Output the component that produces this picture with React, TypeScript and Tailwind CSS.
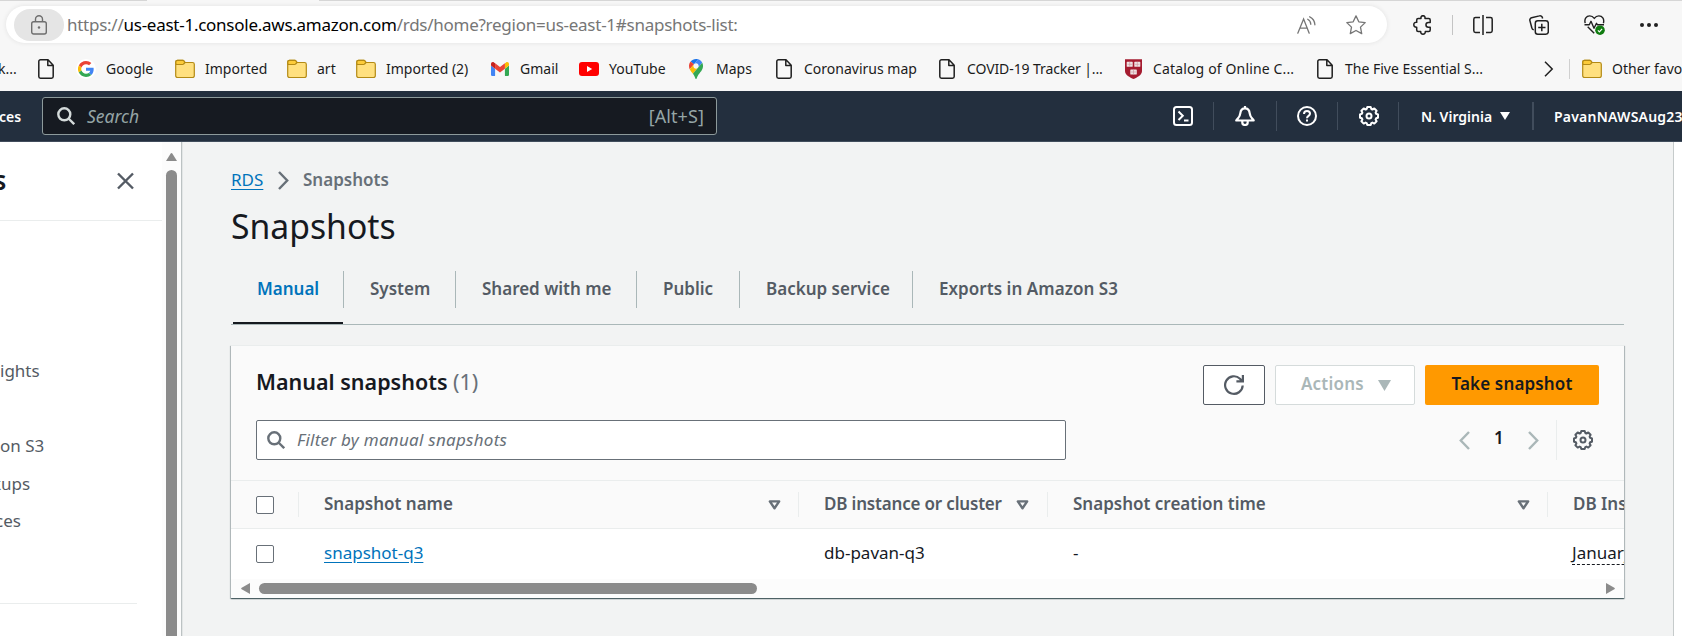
import type { ReactNode } from 'react';

const Doc = () => (
  <svg className="h-5 w-4 shrink-0" viewBox="0 0 16 20" fill="none" stroke="#202020" strokeWidth="1.500" strokeLinejoin="round">
    <path d="M2.500.8H10l5.200 5.400v11.300a1.700 1.700 0 0 1-1.700 1.700h-11A1.700 1.700 0 0 1 .8 17.500V2.500A1.700 1.700 0 0 1 2.500.8zM9.800 1v5.500h5.200" />
  </svg>
);

const Folder = () => (
  <svg className="h-5 w-5 shrink-0" viewBox="0 0 20 20" stroke="#b38a15" strokeWidth="1.200" strokeLinejoin="round">
    <path d="M.7 3v13.700A1.800 1.800 0 0 0 2.500 18.500h15a1.800 1.800 0 0 0 1.800-1.800V5.300a1.800 1.800 0 0 0-1.800-1.800H10L8.200 1.300H2.500A1.800 1.800 0 0 0 .7 3z" fill="#ffe07f" />
    <path d="M.8 4.500V3a1.700 1.700 0 0 1 1.700-1.700h5.300c.5 0 .8.2 1.100.6L10 3.500 8.600 5c-.3.400-.7.500-1.100.500H2A1.100 1.100 0 0 1 .8 4.500z" fill="#fccb3a" />
  </svg>
);

const Google = () => (
  <span className="flex h-5 w-5 shrink-0 items-center justify-center rounded-full bg-white">
    <svg className="h-4 w-4" viewBox="0 0 48 48">
      <path fill="#ea4335" d="M24 9.500c3.500 0 6.700 1.200 9.200 3.600l6.900-6.900C35.900 2.400 30.500 0 24 0 14.600 0 6.500 5.400 2.600 13.200l8 6.200C12.400 13.700 17.700 9.500 24 9.500z" />
      <path fill="#4285f4" d="M47 24.500c0-1.600-.2-3.100-.4-4.500H24v9h12.900c-.6 3-2.300 5.500-4.800 7.200l7.700 6C44.400 38 47 31.800 47 24.500z" />
      <path fill="#fbbc05" d="M10.500 28.600a14.500 14.500 0 0 1 0-9.200l-8-6.200a24 24 0 0 0 0 21.600z" />
      <path fill="#34a853" d="M24 48c6.500 0 11.900-2.100 15.900-5.800l-7.700-6c-2.200 1.500-4.900 2.300-8.200 2.300-6.300 0-11.600-4.200-13.500-9.900l-8 6.200C6.500 42.600 14.600 48 24 48z" />
    </svg>
  </span>
);

const Gmail = () => (
  <svg className="h-3.5 w-[18px] shrink-0" viewBox="52 42 88 66" preserveAspectRatio="none">
    <path fill="#4285f4" d="M58 108h14V74L52 59v43a6 6 0 0 0 6 6" />
    <path fill="#34a853" d="M120 108h14a6 6 0 0 0 6-6V59l-20 15" />
    <path fill="#fbbc04" d="M120 48v26l20-15v-8c0-7.400-8.500-11.700-14.400-7.200" />
    <path fill="#ea4335" d="M72 74V48l24 18 24-18v26L96 92" />
    <path fill="#c5221f" d="M52 51v8l20 15V48l-5.600-4.200C60.500 39.300 52 43.600 52 51" />
  </svg>
);

const YouTube = () => (
  <svg className="h-3.5 w-5 shrink-0" viewBox="0 0 20 14">
    <rect width="20" height="14" rx="3" fill="#f00" />
    <path d="M8 4v6l5.200-3z" fill="#fff" />
  </svg>
);

const Maps = () => (
  <svg className="h-5 w-3.5 shrink-0" viewBox="0 0 92.300 132.300" preserveAspectRatio="none">
    <path fill="#1a73e8" d="M60.200 2.200C55.800.8 51 0 46.100 0 32 0 19.300 6.400 10.800 16.500l21.800 18.300z" />
    <path fill="#ea4335" d="M10.800 16.500C4.100 24.500 0 34.900 0 46.100c0 8.700 1.700 15.700 4.600 22l28-33.300z" />
    <path fill="#4285f4" d="M46.200 28.500c9.800 0 17.700 7.900 17.700 17.700 0 4.300-1.600 8.300-4.200 11.400 0 0 13.900-16.600 27.500-32.700-5.600-10.800-15.300-19-27-22.700L32.600 34.800c3.300-3.800 8.100-6.300 13.600-6.300" />
    <path fill="#fbbc04" d="M46.200 63.800c-9.800 0-17.700-7.900-17.700-17.700 0-4.300 1.500-8.300 4.100-11.300l-28 33.300c4.800 10.600 12.800 19.200 21 29.900l34.100-40.500c-3.300 3.900-8.100 6.300-13.500 6.300" />
    <path fill="#34a853" d="M59.100 109.200c15.400-24.100 33.300-35 33.300-63 0-7.700-1.900-14.900-5.200-21.300L25.600 98c2.600 3.400 5.300 7.300 7.900 11.300 9.400 14.500 6.800 23.100 12.800 23.100s3.400-8.700 12.800-23.200" />
  </svg>
);

const Shield = () => (
  <svg className="h-5 w-[17px] shrink-0" viewBox="0 0 17 20">
    <path d="M0 .3h17V12c0 4-5 6.500-8.500 8C5 18.500 0 16 0 12z" fill="#a51c30" />
    <g fill="#efe4e4">
      <rect x="1.700" y="2.800" width="6" height="5" rx=".6" />
      <rect x="9.300" y="2.800" width="6" height="5" rx=".6" />
      <rect x="5.300" y="10.500" width="6.500" height="5" rx=".6" />
    </g>
    <path d="M4.700 2.800v5M12.300 2.800v5M8.500 10.500v5M2.500 5.300h4.500M10 5.300h4.500M6 13h5" stroke="#c9909a" strokeWidth=".6" />
  </svg>
);

const Gear = ({ className }: { className: string }) => (
  <svg className={className} viewBox="0 0 20 20" fill="none" stroke="currentColor" strokeWidth="2">
    <path strokeLinejoin="round" d="M8.300 1h3.400l.6 2 1.100.5 1.900-1 2.300 2.300-1 1.900.5 1.100 1.900.6v3.300l-1.900.6-.5 1.200 1 1.800-2.300 2.300-1.900-1-1.100.5-.6 1.900H8.300l-.6-1.900-1.100-.5-1.900 1-2.300-2.300 1-1.800-.5-1.200L1 11.700V8.400l1.900-.6.5-1.100-1-1.900 2.300-2.300 1.900 1L7.700 3z" />
    <circle cx="10" cy="10" r="2.500" />
  </svg>
);

const SearchIcon = ({ className }: { className: string }) => (
  <svg className={className} viewBox="0 0 18 18" fill="none" stroke="currentColor" strokeWidth="2.400">
    <circle cx="7.300" cy="7.300" r="6" />
    <path d="M11.500 11.500l5.700 5.700" />
  </svg>
);

const Chevron = ({ className, left }: { className: string; left?: boolean }) => (
  <svg className={className} viewBox="0 0 11 19" fill="none" stroke="currentColor" strokeWidth="2.400">
    <path d={left ? 'M10 1L1.800 9.500 10 18' : 'M1 1l8.200 8.500L1 18'} />
  </svg>
);

const Sort = () => (
  <svg className="h-2.5 w-[13px] shrink-0 text-[#687078]" viewBox="0 0 13 10" fill="none" stroke="currentColor" strokeWidth="2.400">
    <path d="M1.800 1.400h9.400L6.500 8.200z" strokeLinejoin="round" />
  </svg>
);

const Bookmark = ({ icon, label, className }: { icon: ReactNode; label: string; className: string }) => (
  <div className={`flex shrink-0 items-center whitespace-nowrap ${className}`}>
    {icon}
    <span className="pt-px">{label}</span>
  </div>
);

function AddressBar() {
  return (
    <div className="flex h-[45px] shrink-0 flex-col">
      <div className="flex h-px justify-between">
        <div className="w-[147px] bg-[#d6d6d6]" />
        <div className="w-[1363px] bg-[#d6d6d6]" />
      </div>
      <div className="flex items-center pt-[5px]">
        <div className="ml-1.5 flex h-[37px] w-[1381px] shrink-0 items-center rounded-full bg-white pl-2 shadow-[0_0_5px_rgba(0,0,0,0.09)]">
          <div className="flex h-8 w-[50px] items-center justify-center rounded-full bg-[#e5e5e5]">
            <svg className="h-5 w-4" viewBox="0 0 16 20" fill="none" stroke="#6e6e6e" strokeWidth="1.400">
              <rect x=".7" y="6.700" width="14.600" height="12.300" rx="2" />
              <path d="M4.500 6.500V4.200a3.500 3.500 0 0 1 7 0v2.300" />
              <circle cx="8" cy="12.500" r="1.200" fill="#6e6e6e" stroke="none" />
            </svg>
          </div>
          <div className="ml-[3px] flex-1 text-[17px] leading-6 tracking-[-0.26px] text-[#767676]">
            https://<span className="text-black">us-east-1.console.aws.amazon.com</span>/rds/home?region=us-east-1#snapshots-list:
          </div>
          <svg className="h-[18px] w-[19px]" viewBox="0 0 19 18" fill="none" stroke="#767676" strokeWidth="1.300" strokeLinecap="round">
            <path d="M.8 17.200L6.600 3l5.600 14.200M2.800 12.200h7.600" />
            <path d="M10.700 3.300c1.700.9 3 2.800 3.100 5M12.700.8c2.900 1.300 5 4.200 5.200 8" />
          </svg>
          <svg className="mr-[21px] ml-[30px] h-5 w-5" viewBox="0 0 20 20" fill="none" stroke="#767676" strokeWidth="1.300" strokeLinejoin="round">
            <path d="M10 .9l2.800 5.900 6.400.8-4.700 4.500 1.200 6.500-5.700-3.100-5.700 3.100 1.200-6.500L.8 7.600l6.400-.8z" />
          </svg>
        </div>
        <svg className="ml-[26px] h-5 w-[19px] shrink-0" viewBox="0 0 19 20" fill="none" stroke="#202020" strokeWidth="1.500" strokeLinejoin="round">
          <path d="M5.200 3.500H8c-.3-1.800.6-2.800 2-2.800s2.300 1 2 2.800h3.700a1.500 1.500 0 0 1 1.500 1.500v2.400h-1.800a2.400 2.400 0 0 0 0 4.900h1.800v2.700a1.500 1.500 0 0 1-1.500 1.500H12.300c.1 1.700-.8 2.700-2.300 2.700s-2.400-1-2.300-2.700H5.200a1.500 1.500 0 0 1-1.500-1.500v-2.800c-1.800.2-2.900-.8-2.900-2.500s1.100-2.600 2.900-2.400V5a1.500 1.500 0 0 1 1.500-1.500z" />
        </svg>
        <div className="ml-5 h-5 w-px shrink-0 bg-[#c4c4c4]" />
        <svg className="ml-5 h-5 w-5 shrink-0" viewBox="0 0 20 20" fill="none" stroke="#202020" strokeWidth="1.500">
          <path d="M10 0v20M7 2.500H2.500a1.700 1.700 0 0 0-1.700 1.700v11.600a1.700 1.700 0 0 0 1.700 1.700H7M13 2.500h4.500a1.700 1.700 0 0 1 1.700 1.700v11.600a1.700 1.700 0 0 1-1.700 1.700H13" />
        </svg>
        <svg className="ml-9 h-5 w-5 shrink-0" viewBox="0 0 20 20" fill="none" stroke="#202020" strokeWidth="1.500">
          <rect x="6.300" y="5.800" width="13" height="13.400" rx="2.500" />
          <path d="M12.800 8.800v7.400M9.200 12.500h7.300M4.800 14.700a2.500 2.500 0 0 1-2-1.900L.9 5.600a2.300 2.300 0 0 1 1.700-2.800L10.400.9a2.400 2.400 0 0 1 3 1.700l.2.900" />
        </svg>
        <svg className="ml-[35px] h-5 w-[21px] shrink-0" viewBox="0 0 21 20" fill="none" stroke="#202020" strokeWidth="1.400" strokeLinejoin="round">
          <path d="M1.200 8.200C0 3.500 2.500.9 5.700.9c2 0 3.500 1 4.600 2.500C11.400 1.900 12.900.9 14.900.9c3.300 0 5.700 2.700 4.500 7.300M.5 9.800h4.800l1.700-3.500 3 7 2.500-5 1 1.500h6.500M3.700 11.800l6.500 6.500" />
          <circle cx="16" cy="15.200" r="4.800" fill="#107c10" stroke="none" />
          <path d="M13.900 15.300l1.500 1.500 2.700-3" stroke="#fff" strokeWidth="1.200" />
        </svg>
        <div className="ml-[35px] flex shrink-0 gap-[3px]">
          <span className="size-[4px] rounded-full bg-[#202020]" />
          <span className="size-[4px] rounded-full bg-[#202020]" />
          <span className="size-[4px] rounded-full bg-[#202020]" />
        </div>
      </div>
    </div>
  );
}

function Bookmarks() {
  return (
    <div className="flex h-[46px] shrink-0 items-center overflow-hidden pt-px text-[14px] leading-5 text-[#1b1b1b]">
      <div className="flex h-full w-[38px] shrink-0 items-center">
        <span className="-ml-0.5">k...</span>
      </div>
      <Doc />
      <Bookmark className="ml-[22px] w-[99px] gap-[10px]" icon={<Google />} label="Google" />
      <Bookmark className="w-[112px] gap-[10px]" icon={<Folder />} label="Imported" />
      <Bookmark className="w-[69px] gap-[10px]" icon={<Folder />} label="art" />
      <Bookmark className="w-[135px] gap-[10px]" icon={<Folder />} label="Imported (2)" />
      <Bookmark className="w-[88px] gap-[11px]" icon={<Gmail />} label="Gmail" />
      <Bookmark className="w-[110px] gap-[10px]" icon={<YouTube />} label="YouTube" />
      <Bookmark className="w-[87px] gap-[13px]" icon={<Maps />} label="Maps" />
      <Bookmark className="w-[163px] gap-[12px]" icon={<Doc />} label="Coronavirus map" />
      <Bookmark className="w-[186px] gap-[12px] tracking-[-0.1px]" icon={<Doc />} label="COVID-19 Tracker |..." />
      <Bookmark className="w-[192px] gap-[11px] tracking-[0.15px]" icon={<Shield />} label="Catalog of Online C..." />
      <Bookmark className="w-[227px] gap-[12px]" icon={<Doc />} label="The Five Essential S..." />
      <svg className="h-4 w-2.5 shrink-0" viewBox="0 0 10 16" fill="none" stroke="#202020" strokeWidth="1.500">
        <path d="M1 .8L8.200 8 1 15.200" />
      </svg>
      <div className="ml-[15px] h-5 w-px shrink-0 bg-[#d0d0d0]" />
      <Bookmark className="ml-3 w-[120px] gap-[10px]" icon={<Folder />} label="Other favorites" />
    </div>
  );
}

function ConsoleNav() {
  return (
    <header className="flex h-[51px] shrink-0 items-center overflow-hidden border-b border-[#414d5c] bg-[#232f3e] text-[14px] font-semibold text-white">
      <div className="flex w-[42px] shrink-0">
        <span className="-ml-px pt-px">ces</span>
      </div>
      <div className="flex h-[38px] w-[675px] shrink-0 items-center rounded-[3px] border border-[#8d9a9b] bg-[#161a21] pr-3 pl-3.5 font-normal text-[#95a5a6]">
        <SearchIcon className="size-[18px] text-[#d5dbdb]" />
        <span className="ml-3 flex-1 text-[17.500px] leading-6 italic">Search</span>
        <span className="text-[18px] leading-6 tracking-[0.1px]">[Alt+S]</span>
      </div>
      <svg className="ml-[456px] h-5 w-5 shrink-0" viewBox="0 0 20 20" fill="none" stroke="#fff" strokeWidth="2">
        <rect x="1" y="1" width="18" height="18" rx="2.500" />
        <path d="M5.500 5.500L9.800 9.800 5.500 14M11 14.500H15.500" />
      </svg>
      <div className="ml-5 h-7 w-px shrink-0 bg-[#414d5c]" />
      <svg className="ml-[21px] h-5 w-5 shrink-0" viewBox="0 0 20 20" fill="none" stroke="#fff" strokeWidth="2.200" strokeLinejoin="round">
        <path d="M10 0v2.500M10 2.300c-3 0-4.400 2.200-4.700 5C4.900 11 3.500 11.500 1.300 14.500h17.400C16.500 11.500 15.100 11 14.700 7.300c-.3-2.800-1.700-5-4.700-5z" />
        <path d="M7.300 15v1.500a2.700 2.500 0 0 0 5.400 0V15" />
      </svg>
      <div className="ml-[21px] h-[30px] w-px shrink-0 bg-[#414d5c]" />
      <svg className="ml-5 h-5 w-5 shrink-0" viewBox="0 0 20 20" fill="none" stroke="#fff" strokeWidth="2">
        <circle cx="10" cy="10" r="9" />
        <path d="M7 8c0-1.800 1.200-2.900 3-2.900s3 1 3 2.600c0 2.100-3 2.200-3 4.500M10 13.500v2" />
      </svg>
      <div className="ml-5 h-7 w-px shrink-0 bg-[#414d5c]" />
      <Gear className="ml-[21px] h-5 w-5 shrink-0" />
      <div className="ml-[19px] h-7 w-px shrink-0 bg-[#414d5c]" />
      <span className="ml-[22px] w-[79px] shrink-0 pt-px">N. Virginia</span>
      <svg className="h-2 w-2.5 shrink-0" viewBox="0 0 10 8">
        <path d="M0 0h10L5 8z" fill="#fff" />
      </svg>
      <div className="ml-[22px] h-7 w-0.5 shrink-0 bg-[#414d5c]" />
      <span className="ml-5 shrink-0 pt-px tracking-[0.22px]">PavanNAWSAug23</span>
    </header>
  );
}

function Sidebar() {
  return (
    <aside className="flex w-[183px] shrink-0 bg-white">
      <div className="flex w-[162px] shrink-0 flex-col overflow-hidden text-[17px] leading-6 text-[#545b64]">
        <div className="flex h-[79px] shrink-0 items-center justify-between border-b border-[#eaeded] pr-7">
          <span className="-ml-[6px] text-[22px] font-bold text-[#16191f]">S</span>
          <svg className="h-[18px] w-[17px]" viewBox="0 0 17 18" stroke="#545b64" strokeWidth="2.400">
            <path d="M1 1.500l15 15M16 1.500l-15 15" />
          </svg>
        </div>
        <span className="mt-[138px]">ights</span>
        <span className="mt-[51px] whitespace-nowrap">on S3</span>
        <span className="-ml-[8px] mt-[14px]">kups</span>
        <span className="-ml-[5px] mt-[13px]">ces</span>
        <div className="mt-[70px] w-[137px] border-b border-[#eaeded]" />
      </div>
      <div className="flex w-[19px] flex-col items-center bg-[#fcfcfc] pt-[11px]">
        <svg className="h-2 w-[11px] shrink-0" viewBox="0 0 11 8">
          <path d="M4.500.8a1.200 1.200 0 0 1 2 0L11 8H0z" fill="#8b8b8b" />
        </svg>
        <div className="mt-[9px] w-[11px] flex-1 rounded-t-full bg-[#8b8b8b]" />
      </div>
      <div className="w-px bg-[#bcc2c3]" />
      <div className="w-px bg-[#e3e6e6]" />
    </aside>
  );
}

const tabs = ['Manual', 'System', 'Shared with me', 'Public', 'Backup service', 'Exports in Amazon S3'];
const tabWidths = ['w-[113px]', 'w-[112px]', 'w-[181px]', 'w-[103px]', 'w-[173px]', 'w-[230px]'];

function Tabs() {
  return (
    <nav className="mt-[22px] flex h-[54px] items-start border-b border-[#aab7b8] font-semibold text-[#545b64]">
      {tabs.map((tab, i) => (
        <div
          key={tab}
          className={`flex h-[53px] shrink-0 flex-col justify-between ${tabWidths[i]} ${i === 0 ? 'text-[#0073bb]' : ''}`}
        >
          <div className={`flex h-[37px] items-center pb-0.5 pl-[26px] whitespace-nowrap ${i < 5 ? 'border-r border-[#aab7b8]' : 'tracking-[0.05px]'}`}>
            {tab}
          </div>
          {i === 0 && <div className="mr-px ml-0.5 h-0.5 bg-[#16191f]" />}
        </div>
      ))}
    </nav>
  );
}

const Checkbox = () => <span className="size-[18px] shrink-0 rounded-[2px] border border-[#687078] bg-white" />;
const Split = () => <span className="h-[25px] w-px shrink-0 bg-[#eaeded]" />;

function SnapshotsCard() {
  return (
    <section className="mt-5 flex h-[253px] w-[1393px] flex-col overflow-hidden border-t border-[#eaeded] bg-[#fafafa] shadow-[0_1px_1px_0_rgba(0,28,36,0.5),1px_1px_1px_0_rgba(0,28,36,0.2),-1px_1px_1px_0_rgba(0,28,36,0.2)]">
      <div className="flex h-[59px] shrink-0 items-end px-[25px]">
        <h2 className="flex-1 pb-[7px] text-[21.500px] leading-8 font-semibold text-[#16191f]">
          Manual snapshots <span className="font-normal text-[#687078]">(1)</span>
        </h2>
        <button className="flex h-10 w-[62px] items-center justify-center rounded-[2px] border border-[#545b64] bg-white">
          <svg className="size-5" viewBox="0 0 20 20" fill="none" stroke="#545b64" strokeWidth="2.200">
            <path d="M18.700 10.500a8.800 8.800 0 1 1-2.700-6.800l2.300 2.500M18.900 0v6.300h-6.500" />
          </svg>
        </button>
        <button className="ml-2.5 flex h-10 w-[140px] items-center rounded-[2px] border border-[#d5dbdb] bg-white pl-[25px] font-semibold text-[#aab7b8]">
          <span className="w-[77px] pb-0.5 text-left tracking-[0.2px]">Actions</span>
          <svg className="h-[11px] w-[13px]" viewBox="0 0 13 11">
            <path d="M0 0h13L6.500 11z" fill="#aab7b8" />
          </svg>
        </button>
        <button className="ml-2.5 h-10 w-[174px] rounded-[2px] bg-[#ff9900] pb-0.5 font-semibold tracking-[0.15px] whitespace-nowrap text-[#16191f]">
          Take snapshot
        </button>
      </div>
      <div className="mt-[15px] flex h-10 shrink-0 items-center pr-[31px] pl-[25px]">
        <div className="flex h-10 w-[810px] items-center rounded-[2px] border border-[#687078] bg-white pl-2.5 text-[#687078]">
          <SearchIcon className="size-[18px]" />
          <span className="ml-3 tracking-[0.27px] italic">Filter by manual snapshots</span>
        </div>
        <div className="flex-1" />
        <Chevron left className="h-[19px] w-[11px] text-[#aab7b8]" />
        <span className="w-[58px] pb-1 pl-6 font-semibold text-[#16191f]">1</span>
        <Chevron className="h-[19px] w-[11px] text-[#aab7b8]" />
        <div className="mr-4 ml-[17px] h-10 w-px bg-[#eaeded]" />
        <Gear className="size-5 text-[#545b64]" />
      </div>
      <div className="mt-5 flex h-[49px] shrink-0 items-center border-y border-[#eaeded] pl-[25px] font-semibold whitespace-nowrap text-[#545b64]">
        <Checkbox />
        <span className="w-[24px] shrink-0" />
        <Split />
        <span className="w-[469px] shrink-0 pb-px pl-[25px]">Snapshot name</span>
        <Sort />
        <span className="w-[17px] shrink-0" />
        <Split />
        <span className="w-[217px] shrink-0 pb-px pl-[25px] tracking-[-0.18px]">DB instance or cluster</span>
        <Sort />
        <span className="w-[18px] shrink-0" />
        <Split />
        <span className="w-[469px] shrink-0 pb-px pl-[25px]">Snapshot creation time</span>
        <Sort />
        <span className="w-[17px] shrink-0" />
        <Split />
        <span className="shrink-0 pb-px pl-[25px]">DB Instance created time</span>
      </div>
      <div className="flex h-[50px] shrink-0 items-center bg-white pl-[25px] whitespace-nowrap text-[#16191f]">
        <Checkbox />
        <span className="w-[549px] shrink-0 pb-[3px] pl-[50px]">
          <span className="text-[#0073bb] underline underline-offset-[3px]">snapshot-q3</span>
        </span>
        <span className="w-[250px] shrink-0 pb-[3px] pl-px">db-pavan-q3</span>
        <span className="w-[499px] shrink-0 pb-[3px]">-</span>
        <span className="mb-0.5 shrink-0 border-b border-dashed border-[#16191f] leading-[22px]">January 15, 2024</span>
      </div>
      <div className="flex flex-1 items-center bg-[#fcfcfc] pr-[9px] pl-[10px]">
        <svg className="h-[11px] w-[9px]" viewBox="0 0 9 11">
          <path d="M9 0v11L.7 6.200a.9.900 0 0 1 0-1.500z" fill="#8b8b8b" />
        </svg>
        <div className="ml-[9px] h-[11px] w-[498px] rounded-full bg-[#8b8b8b]" />
        <div className="flex-1" />
        <svg className="h-[11px] w-[9px]" viewBox="0 0 9 11">
          <path d="M0 0v11l8.300-4.800a.9.900 0 0 0 0-1.500z" fill="#8b8b8b" />
        </svg>
      </div>
    </section>
  );
}

export default function App() {
  return (
    <div className="flex h-[636px] w-[1682px] flex-col overflow-hidden bg-[#f7f7f7] font-['Noto_Sans',sans-serif]">
      <AddressBar />
      <Bookmarks />
      <ConsoleNav />
      <div className="flex min-h-0 flex-1 bg-white">
        <Sidebar />
        <main className="w-[1491px] shrink-0 border-r border-[#c6cbcb] bg-[#f2f3f3] pt-[26px] pr-[49px] pl-[48px] text-[17px] leading-6">
          <div className="flex items-center font-semibold text-[#687078]">
            <span className="w-[47px] font-normal text-[#0073bb] underline underline-offset-[3px]">RDS</span>
            <Chevron className="h-[19px] w-[11px]" />
            <span className="ml-[14px]">Snapshots</span>
          </div>
          <h1 className="mt-[11px] text-[33.700px] leading-[46px] text-[#16191f]">Snapshots</h1>
          <Tabs />
          <SnapshotsCard />
        </main>
      </div>
    </div>
  );
}
